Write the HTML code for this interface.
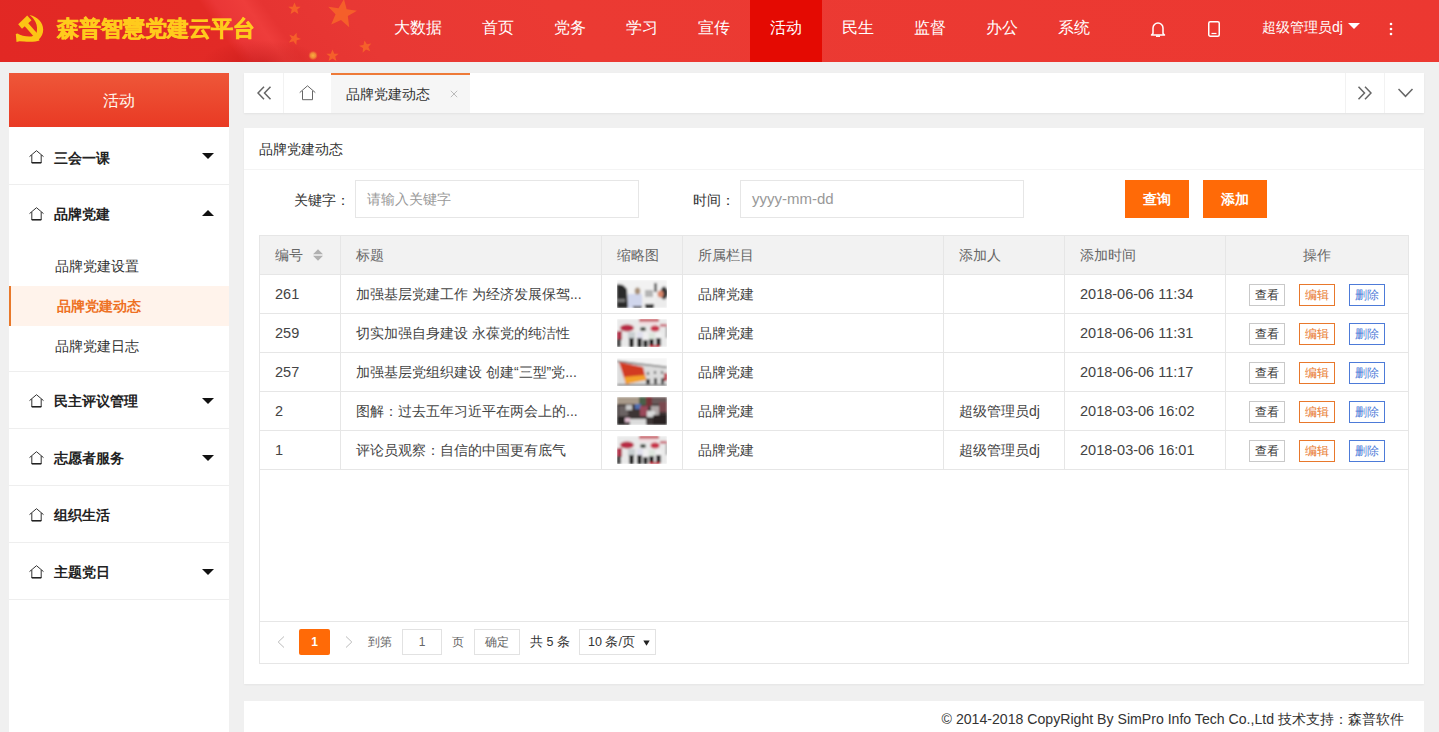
<!DOCTYPE html>
<html><head><meta charset="utf-8">
<style>
*{margin:0;padding:0;box-sizing:border-box}
html,body{width:1439px;height:732px;overflow:hidden}
body{background:#f0f0f0;font-family:"Liberation Sans",sans-serif;font-size:14px;color:#333;position:relative}
.abs{position:absolute}
#hdr{position:absolute;left:0;top:0;width:1439px;height:62px;background:#e9312b;overflow:hidden}
#logo-t{position:absolute;left:57px;top:14px;font-size:22px;line-height:30px;font-weight:bold;color:#ffcb1c;white-space:nowrap;-webkit-text-stroke:0.5px #ffcb1c}
#hbg{position:absolute;left:0;top:0;width:1439px;height:62px;background:radial-gradient(60px 22px at 262px 62px,rgba(170,10,10,.35),rgba(170,10,10,0)),linear-gradient(55deg,#e22824 0%,#e22a26 16.3%,#ea3636 17.3%,#ee3d3b 19.3%,#e63432 20.5%,#e83834 26%,#eb3a33 40%,#ec3831 100%)}
.nav{position:absolute;top:0;height:62px;line-height:55px;font-size:16px;color:#fff;text-align:center;white-space:nowrap}
.nav.on{background:#e40a02}
#side{position:absolute;left:9px;top:73px;width:220px;height:659px;background:#fff}
#side-t{height:54px;background:linear-gradient(#ee5739,#e93a24);color:#fff8ee;font-size:16px;text-align:center;line-height:56px}
.mi{position:relative;height:57px;border-bottom:1px solid #eeeeee;font-weight:bold;color:#222;font-size:14px}
.mi .tx{position:absolute;left:45px;top:1px;line-height:56px}
.mi svg.h{position:absolute;left:20px;top:22px}
.mi .car{position:absolute;left:193px;top:26px;width:0;height:0;border-left:6px solid transparent;border-right:6px solid transparent;border-top:6px solid #111}
.mi .car.up{border-top:0;border-bottom:6px solid #111;top:25px}
.sub{position:relative;height:40px;line-height:40px;padding-left:46px;color:#333;font-size:14px}
.sub.on{background:#fff3eb;color:#ee7124;font-weight:bold;border-left:2px solid #e8782a;padding-left:46px}
#tabs{position:absolute;left:244px;top:73px;width:1180px;height:40px;background:#fff;box-shadow:0 1px 2px rgba(0,0,0,.06)}
#panel{position:absolute;left:244px;top:128px;width:1180px;height:556px;background:#fff;box-shadow:0 1px 2px rgba(0,0,0,.05)}
#foot{position:absolute;left:244px;top:701px;width:1180px;height:31px;background:#fff}

.tb{position:absolute;top:0;height:40px}
.tsep{position:absolute;top:0;width:1px;height:40px;background:#f2f2f2}
#tact{position:absolute;left:87px;top:0;width:139px;height:40px;background:#f6f6f6;border-top:2px solid #ee7a38}
#tact span{position:absolute;left:15px;top:9px;font-size:14px;line-height:20px;color:#333}
#tact i{position:absolute;left:118px;top:9px;font-style:normal;font-size:14px;line-height:20px;color:#bbb}
#ptitle{position:absolute;left:15px;top:10px;line-height:22px;font-size:14px;color:#333}
#panel::before{content:"";position:absolute;left:0;top:41px;width:1180px;height:1px;background:#f4f4f4}
.lbl{position:absolute;top:62px;line-height:20px;font-size:14px;color:#333}
.inp{position:absolute;top:52px;height:38px;border:1px solid #e6e6e6;line-height:36px;padding-left:11px;color:#999;font-size:14px}
.obtn{position:absolute;top:52px;width:64px;height:38px;background:#ff6a07;color:#fff;font-weight:bold;text-align:center;line-height:38px;font-size:14px}
#tbox{position:absolute;left:15px;top:107px;width:1150px;height:429px;border:1px solid #e6e6e6}
#tbl{border-collapse:collapse;table-layout:fixed;width:1149px;margin:-1px 0 0 -1px}
#tbl th{position:relative;height:39px;background:#f2f2f2;font-weight:normal;text-align:left;padding:2px 15px 0;color:#666;border:1px solid #e6e6e6;font-size:14px}
#tbl td{height:39px;padding:2px 15px 0;border:1px solid #e6e6e6;color:#444;font-size:14px;white-space:nowrap;overflow:hidden}
#tbl td.num{font-family:"Liberation Sans",sans-serif;font-size:14.5px;padding:0 15px 1px}
#tbl td .th{display:block;position:relative;top:-1px;overflow:hidden}
#tbl td.op{text-align:center;padding:2px 0 0;font-size:0}
.b{display:inline-block;width:36px;height:22px;line-height:20px;font-size:12px;text-align:center;border:1px solid #c9c9c9;color:#333;margin:0 7px;vertical-align:middle;background:#fff}
.b2{border-color:#e8782c;color:#e8782c}
.b3{border-color:#4d7bd8;color:#4d7bd8}
#pager{position:absolute;left:0;top:385px;width:1148px;height:42px;border-top:1px solid #e6e6e6}
.pg1{left:39px;top:7px;width:31px;height:26px;background:#ff6a07;color:#fff;border-radius:2px;text-align:center;line-height:26px;font-size:12px;font-weight:bold}
.ptx{top:7px;line-height:26px;font-size:12px;color:#666}
.pbox{top:7px;height:26px;border:1px solid #e2e2e2;line-height:24px;font-size:12px;color:#666;text-align:center}
#ftx{position:absolute;right:20px;top:8px;font-size:14.12px;line-height:20px;color:#333;white-space:nowrap}
.m1 .tx{top:3px!important}.m1 svg.h{top:23px!important}
</style></head>
<body>
<svg width="0" height="0" style="position:absolute"><defs><filter id="bl" x="0" y="0" width="100%" height="100%"><feGaussianBlur stdDeviation="0.8"/></filter></defs></svg>
<div id="hdr">
  <div id="hbg"></div>
  <svg class="abs" style="left:270px;top:0" width="140" height="62" viewBox="0 0 140 62">
    <g fill="#f7642a" opacity="0.9">
      <polygon id="st" points="0,-6 1.76,-1.85 6.2,-1.85 2.7,0.95 3.9,5.6 0,3 -3.9,5.6 -2.7,0.95 -6.2,-1.85 -1.76,-1.85" transform="translate(24.5,8.5)"/>
      <use href="#st" transform="translate(0,30) rotate(20 24.5 8.5)"/>
      <use href="#st" transform="translate(71,38) rotate(-10 24.5 8.5)"/>
      <use href="#st" transform="translate(38,47)"/>
      <polygon points="0,-14 4.1,-4.3 14.5,-4.3 6.2,2.2 9.1,13 0,7 -9.1,13 -6.2,2.2 -14.5,-4.3 -4.1,-4.3" transform="translate(72,13) rotate(8)"/>
    </g>
    <circle cx="43" cy="55.5" r="4.5" fill="url(#spk)"/><defs><radialGradient id="spk"><stop offset="0" stop-color="#f8b040"/><stop offset="0.6" stop-color="#f49a38" stop-opacity="0.8"/><stop offset="1" stop-color="#f07030" stop-opacity="0.2"/></radialGradient></defs>
  </svg>
  <svg class="abs" style="left:10px;top:10px" width="40" height="36" viewBox="0 0 40 36">
    <g fill="#fcc515">
      <path d="M19.5 5 C27.5 6.5 33.2 12.5 33.2 19.5 C33.2 23.5 31.5 27 29 29.2 L29.5 30.5 C27 31.8 20 32 14 31.6 L9.5 31.3 L6.5 32 L5.8 24 L7.5 23.6 C11 26 17 26.8 21.5 26.4 L26.2 24.2 C27.6 20 27.3 15.5 25.5 12 C24 9 22 6.8 19.5 5 Z"/>
      <polygon points="21.5,10.3 17.2,5.6 8.2,14.3 12,18.8"/>
      <polygon points="14.3,15.8 17.6,12.6 29.3,25.8 26,29"/>
    </g>
  </svg>
  <div id="logo-t">森普智慧党建云平台</div>
  <div class="nav" style="left:374px;width:88px">大数据</div>
  <div class="nav" style="left:462px;width:72px">首页</div>
  <div class="nav" style="left:534px;width:72px">党务</div>
  <div class="nav" style="left:606px;width:72px">学习</div>
  <div class="nav" style="left:678px;width:72px">宣传</div>
  <div class="nav on" style="left:750px;width:72px">活动</div>
  <div class="nav" style="left:822px;width:72px">民生</div>
  <div class="nav" style="left:894px;width:72px">监督</div>
  <div class="nav" style="left:966px;width:72px">办公</div>
  <div class="nav" style="left:1038px;width:72px">系统</div>
  <svg class="abs" style="left:1150px;top:20px" width="16" height="18" viewBox="0 0 16 18">
    <path d="M3 13.5 V8 A5 5 0 0 1 13 8 V13.5 L14.5 15 H1.5 Z" fill="none" stroke="#fff" stroke-width="1.5" stroke-linejoin="round"/>
    <path d="M6 16.2 H10" stroke="#fff" stroke-width="1.5"/>
  </svg>
  <svg class="abs" style="left:1207px;top:21px" width="14" height="16" viewBox="0 0 14 16">
    <rect x="1.75" y="0.75" width="10.5" height="14.5" rx="1.5" fill="none" stroke="#fff" stroke-width="1.5"/>
    <path d="M4.5 12.5 H9.5" stroke="#fff" stroke-width="1.2"/>
  </svg>
  <div class="abs" style="left:1262px;top:17px;font-size:14px;color:#fff;line-height:20px;white-space:nowrap">超级管理员dj</div>
  <div class="abs" style="left:1348px;top:23px;width:0;height:0;border-left:6px solid transparent;border-right:6px solid transparent;border-top:6px solid #fff"></div>
  <svg class="abs" style="left:1389px;top:22px" width="4" height="14" viewBox="0 0 4 14">
    <circle cx="2" cy="2" r="1.3" fill="#fff"/><circle cx="2" cy="7" r="1.3" fill="#fff"/><circle cx="2" cy="12" r="1.3" fill="#fff"/>
  </svg>
</div>

<div id="side">
  <div id="side-t">活动</div>
  <div class="mi m1" style="height:58px"><svg class="h" width="15" height="14" viewBox="0 0 15 14"><path d="M0.5 6.6 L7.5 0.7 L14.5 6.6" fill="none" stroke="#333" stroke-width="1"/><path d="M2.8 5 V13 H12.2 V5" fill="none" stroke="#333" stroke-width="1"/><path d="M2.8 12.6 H12.2" stroke="#222" stroke-width="1.2"/></svg><span class="tx">三会一课</span><i class="car"></i></div>
  <div style="border-bottom:1px solid #eee">
    <div class="mi" style="border:0;height:56px"><svg class="h" width="15" height="14" viewBox="0 0 15 14"><path d="M0.5 6.6 L7.5 0.7 L14.5 6.6" fill="none" stroke="#333" stroke-width="1"/><path d="M2.8 5 V13 H12.2 V5" fill="none" stroke="#333" stroke-width="1"/><path d="M2.8 12.6 H12.2" stroke="#222" stroke-width="1.2"/></svg><span class="tx">品牌党建</span><i class="car up"></i></div>
    <div style="padding:5px 0">
      <div class="sub">品牌党建设置</div>
      <div class="sub on">品牌党建动态</div>
      <div class="sub">品牌党建日志</div>
    </div>
  </div>
  <div class="mi"><svg class="h" width="15" height="14" viewBox="0 0 15 14"><path d="M0.5 6.6 L7.5 0.7 L14.5 6.6" fill="none" stroke="#333" stroke-width="1"/><path d="M2.8 5 V13 H12.2 V5" fill="none" stroke="#333" stroke-width="1"/><path d="M2.8 12.6 H12.2" stroke="#222" stroke-width="1.2"/></svg><span class="tx">民主评议管理</span><i class="car"></i></div>
  <div class="mi"><svg class="h" width="15" height="14" viewBox="0 0 15 14"><path d="M0.5 6.6 L7.5 0.7 L14.5 6.6" fill="none" stroke="#333" stroke-width="1"/><path d="M2.8 5 V13 H12.2 V5" fill="none" stroke="#333" stroke-width="1"/><path d="M2.8 12.6 H12.2" stroke="#222" stroke-width="1.2"/></svg><span class="tx">志愿者服务</span><i class="car"></i></div>
  <div class="mi"><svg class="h" width="15" height="14" viewBox="0 0 15 14"><path d="M0.5 6.6 L7.5 0.7 L14.5 6.6" fill="none" stroke="#333" stroke-width="1"/><path d="M2.8 5 V13 H12.2 V5" fill="none" stroke="#333" stroke-width="1"/><path d="M2.8 12.6 H12.2" stroke="#222" stroke-width="1.2"/></svg><span class="tx">组织生活</span></div>
  <div class="mi"><svg class="h" width="15" height="14" viewBox="0 0 15 14"><path d="M0.5 6.6 L7.5 0.7 L14.5 6.6" fill="none" stroke="#333" stroke-width="1"/><path d="M2.8 5 V13 H12.2 V5" fill="none" stroke="#333" stroke-width="1"/><path d="M2.8 12.6 H12.2" stroke="#222" stroke-width="1.2"/></svg><span class="tx">主题党日</span><i class="car"></i></div>
</div>

<div id="tabs">
  <div class="tb" style="left:0;width:39px"><svg style="position:absolute;left:13px;top:13px" width="15" height="14" viewBox="0 0 15 14"><path d="M7 0.7 L1 7 L7 13.3 M13.5 0.7 L7.5 7 L13.5 13.3" fill="none" stroke="#666" stroke-width="1.5"/></svg></div>
  <div class="tsep" style="left:39px"></div>
  <div class="tb" style="left:40px;width:47px"><svg style="position:absolute;left:15px;top:12px" width="17" height="16" viewBox="0 0 17 16">
    <path d="M0.7 7.6 L8.5 0.8 L16.3 7.6" fill="none" stroke="#666" stroke-width="1"/><path d="M3.5 5.8 V14.7 H13.5 V5.8" fill="none" stroke="#666" stroke-width="1"/></svg></div>
  <div id="tact"><span>品牌党建动态</span><svg style="position:absolute;left:119px;top:15px" width="8" height="8" viewBox="0 0 8 8"><path d="M0.8 0.8 L7.2 7.2 M7.2 0.8 L0.8 7.2" stroke="#bbb" stroke-width="1"/></svg></div>
  <div class="tsep" style="left:1101px"></div>
  <div class="tb" style="left:1102px;width:39px"><svg style="position:absolute;left:11px;top:13px" width="15" height="14" viewBox="0 0 15 14"><path d="M1.5 0.7 L7.5 7 L1.5 13.3 M8 0.7 L14 7 L8 13.3" fill="none" stroke="#666" stroke-width="1.5"/></svg></div>
  <div class="tsep" style="left:1140px"></div>
  <div class="tb" style="left:1141px;width:39px"><svg style="position:absolute;left:13px;top:15px" width="16" height="10" viewBox="0 0 16 10"><path d="M0.5 1 L7.5 8.3 L14.5 1" fill="none" stroke="#666" stroke-width="1.5"/></svg></div>
</div>

<div id="panel">
  <div id="ptitle">品牌党建动态</div>
  <div class="lbl" style="left:50px">关键字：</div>
  <div class="inp" style="left:111px;width:284px">请输入关键字</div>
  <div class="lbl" style="left:449px">时间：</div>
  <div class="inp" style="left:496px;width:284px;font-family:'Liberation Sans',sans-serif;font-size:15px">yyyy-mm-dd</div>
  <div class="obtn" style="left:881px">查询</div>
  <div class="obtn" style="left:959px">添加</div>
  <div id="tbox">
    <table id="tbl">
      <colgroup><col style="width:81px"><col style="width:261px"><col style="width:81px"><col style="width:261px"><col style="width:121px"><col style="width:161px"><col style="width:183px"></colgroup>
      <thead><tr><th>编号 <svg style="position:absolute;left:53px;top:13px" width="11" height="13" viewBox="0 0 11 13"><path d="M5 0.3 L10 5.2 H0 Z M0 6.8 H10 L5 11.8 Z" fill="#b0b0b0"/></svg></th><th>标题</th><th>缩略图</th><th>所属栏目</th><th>添加人</th><th>添加时间</th><th style="text-align:center">操作</th></tr></thead>
      <tbody>
<tr><td class="num">261</td><td>加强基层党建工作 为经济发展保驾...</td><td><svg class="th" width="50" height="28" viewBox="0 0 50 28"><g filter="url(#bl)"><rect width="50" height="28" fill="#f2f2f2"/>
<polygon points="0,4 6,5 10,9 11,28 0,28" fill="#2a2a2a"/><rect x="1" y="19" width="7" height="3" fill="#777"/>
<rect x="28" y="10" width="8" height="7" fill="#b4b4b4"/><rect x="37" y="3" width="3" height="9" fill="#666"/>
<rect x="11" y="14" width="14" height="14" fill="#d0d6ec"/><ellipse cx="20.5" cy="11" rx="2.8" ry="3.6" fill="#a89078"/>
<rect x="25" y="17" width="13" height="10" fill="#eeeeee"/><rect x="28" y="24" width="9" height="4" fill="#303030"/><rect x="16" y="26" width="9" height="2" fill="#383838"/>
<rect x="38" y="17" width="12" height="11" fill="#ececec"/><ellipse cx="47" cy="13" rx="3.5" ry="6.5" fill="#303030"/><ellipse cx="43.5" cy="14" rx="3" ry="3.5" fill="#d8866a"/></g></svg></td><td>品牌党建</td><td></td><td class="num">2018-06-06 11:34</td><td class="op"><span class="b b1">查看</span><span class="b b2">编辑</span><span class="b b3">删除</span></td></tr>
<tr><td class="num">259</td><td>切实加强自身建设 永葆党的纯洁性</td><td><svg class="th" width="50" height="28" viewBox="0 0 50 28"><g filter="url(#bl)"><rect width="50" height="28" fill="#e9e9e9"/>
<rect x="22" y="0" width="20" height="2.5" fill="#c0404c"/><rect x="22" y="3" width="18" height="3" fill="#f2dde0"/>
<ellipse cx="10" cy="9" rx="7" ry="3.5" fill="#b82c44"/><rect x="0" y="12" width="5" height="9" fill="#b03048"/><rect x="0" y="20" width="4" height="8" fill="#404040"/>
<ellipse cx="38" cy="9.5" rx="4.5" ry="3" fill="#c83048"/><rect x="43" y="5" width="7" height="2.5" fill="#c86070"/>
<rect x="49" y="8" width="1" height="11" fill="#303030"/>
<rect x="11" y="13" width="7" height="7" fill="#c8ced0"/><rect x="12" y="19" width="5" height="9" fill="#2a2a2a"/>
<rect x="20" y="13" width="6" height="7" fill="#e0e0ec"/><rect x="20" y="19" width="5" height="9" fill="#2a2a2a"/>
<rect x="26" y="14" width="5" height="7" fill="#f0f0f0"/><rect x="26" y="21" width="5" height="7" fill="#303030"/>
<rect x="32" y="14" width="6" height="7" fill="#dde6dd"/><rect x="32" y="20" width="5" height="8" fill="#282828"/>
<rect x="39" y="14" width="6" height="6" fill="#f0f0f0"/><rect x="39" y="19" width="5" height="8" fill="#303030"/>
<ellipse cx="26" cy="10" rx="3" ry="2" fill="#404a40"/><rect x="32" y="26" width="11" height="2" fill="#c02838"/></g></svg></td><td>品牌党建</td><td></td><td class="num">2018-06-06 11:31</td><td class="op"><span class="b b1">查看</span><span class="b b2">编辑</span><span class="b b3">删除</span></td></tr>
<tr><td class="num">257</td><td>加强基层党组织建设 创建“三型”党...</td><td><svg class="th" width="50" height="28" viewBox="0 0 50 28"><g filter="url(#bl)"><rect width="50" height="28" fill="#f4f4f4"/>
<polygon points="0,3 50,9 50,28 0,28" fill="#dcdcdc"/><polygon points="0,2.5 50,8.5 50,10 0,4" fill="#707070"/>
<rect x="30" y="14" width="2" height="3" fill="#505050"/><rect x="37" y="13" width="2" height="3" fill="#606060"/><rect x="44" y="13" width="2" height="3" fill="#606060"/>
<polygon points="2,4 26,9 29,21 9,26" fill="#d23a22"/><polygon points="7,19 28,17 29,22 9,26" fill="#f3a22c"/>
<rect x="29" y="21" width="4" height="7" fill="#303030"/><rect x="37" y="20" width="3" height="8" fill="#404040"/><rect x="44" y="20" width="3" height="8" fill="#404040"/>
<rect x="47" y="15" width="3" height="8" fill="#b83040"/><rect x="0" y="26" width="50" height="2" fill="#8a8a8a"/></g></svg></td><td>品牌党建</td><td></td><td class="num">2018-06-06 11:17</td><td class="op"><span class="b b1">查看</span><span class="b b2">编辑</span><span class="b b3">删除</span></td></tr>
<tr><td class="num">2</td><td>图解：过去五年习近平在两会上的...</td><td><svg class="th" width="50" height="28" viewBox="0 0 50 28"><g filter="url(#bl)"><rect width="50" height="28" fill="#3c3434"/>
<rect x="0" y="0" width="22" height="7" fill="#a89a8a"/><rect x="22" y="0" width="7" height="8" fill="#4a6048"/><rect x="29" y="0" width="6" height="9" fill="#7a3038"/><rect x="35" y="0" width="15" height="7" fill="#6a5a5a"/>
<rect x="2" y="9" width="9" height="10" fill="#6a6464"/><rect x="9" y="8" width="6" height="5" fill="#c8c8c8"/><rect x="18" y="7" width="6" height="5" fill="#5070b0"/>
<rect x="23" y="9" width="8" height="10" fill="#9a4a5a"/><rect x="34" y="9" width="8" height="9" fill="#b0a8a8"/><rect x="42" y="5" width="8" height="10" fill="#7a4a50"/>
<rect x="13" y="22" width="16" height="6" fill="#dcdcdc"/><rect x="8" y="21" width="5" height="4" fill="#e0c0d0"/><rect x="30" y="14" width="8" height="6" fill="#d8d8d8"/>
<rect x="36" y="18" width="14" height="10" fill="#2a2424"/><rect x="0" y="20" width="8" height="8" fill="#2a2626"/></g></svg></td><td>品牌党建</td><td>超级管理员dj</td><td class="num">2018-03-06 16:02</td><td class="op"><span class="b b1">查看</span><span class="b b2">编辑</span><span class="b b3">删除</span></td></tr>
<tr><td class="num">1</td><td>评论员观察：自信的中国更有底气</td><td><svg class="th" width="50" height="28" viewBox="0 0 50 28"><g filter="url(#bl)"><rect width="50" height="28" fill="#e9e9e9"/>
<rect x="22" y="0" width="20" height="2.5" fill="#c0404c"/><rect x="22" y="3" width="18" height="3" fill="#f2dde0"/>
<ellipse cx="10" cy="9" rx="7" ry="3.5" fill="#b82c44"/><rect x="0" y="12" width="5" height="9" fill="#b03048"/><rect x="0" y="20" width="4" height="8" fill="#404040"/>
<ellipse cx="38" cy="9.5" rx="4.5" ry="3" fill="#c83048"/><rect x="43" y="5" width="7" height="2.5" fill="#c86070"/>
<rect x="49" y="8" width="1" height="11" fill="#303030"/>
<rect x="11" y="13" width="7" height="7" fill="#c8ced0"/><rect x="12" y="19" width="5" height="9" fill="#2a2a2a"/>
<rect x="20" y="13" width="6" height="7" fill="#e0e0ec"/><rect x="20" y="19" width="5" height="9" fill="#2a2a2a"/>
<rect x="26" y="14" width="5" height="7" fill="#f0f0f0"/><rect x="26" y="21" width="5" height="7" fill="#303030"/>
<rect x="32" y="14" width="6" height="7" fill="#dde6dd"/><rect x="32" y="20" width="5" height="8" fill="#282828"/>
<rect x="39" y="14" width="6" height="6" fill="#f0f0f0"/><rect x="39" y="19" width="5" height="8" fill="#303030"/>
<ellipse cx="26" cy="10" rx="3" ry="2" fill="#404a40"/><rect x="32" y="26" width="11" height="2" fill="#c02838"/></g></svg></td><td>品牌党建</td><td>超级管理员dj</td><td class="num">2018-03-06 16:01</td><td class="op"><span class="b b1">查看</span><span class="b b2">编辑</span><span class="b b3">删除</span></td></tr>
      </tbody>
    </table>
    <div id="pager">
      <svg class="abs" style="left:17px;top:14px" width="8" height="12" viewBox="0 0 8 12"><path d="M7 0.5 L1.2 6 L7 11.5" fill="none" stroke="#bbb" stroke-width="1"/></svg>
      <div class="abs pg1">1</div>
      <svg class="abs" style="left:85px;top:14px" width="8" height="12" viewBox="0 0 8 12"><path d="M1 0.5 L6.8 6 L1 11.5" fill="none" stroke="#bbb" stroke-width="1"/></svg>
      <div class="abs ptx" style="left:108px">到第</div>
      <div class="abs pbox" style="left:142px;width:40px">1</div>
      <div class="abs ptx" style="left:192px">页</div>
      <div class="abs pbox" style="left:214px;width:46px">确定</div>
      <div class="abs ptx" style="left:270px;color:#333;font-size:12.5px">共 5 条</div>
      <div class="abs pbox" style="left:319px;width:77px;text-align:left;padding-left:8px;color:#333;font-size:12.5px">10 条/页<svg style="position:absolute;left:63px;top:10px" width="7" height="6" viewBox="0 0 7 6"><path d="M0.3 0.5 H6.7 L3.5 5.7 Z" fill="#222"/></svg></div>
    </div>
  </div>
</div>

<div id="foot"><div id="ftx">© 2014-2018 CopyRight By SimPro Info Tech Co.,Ltd 技术支持：森普软件</div></div>
</body></html>
